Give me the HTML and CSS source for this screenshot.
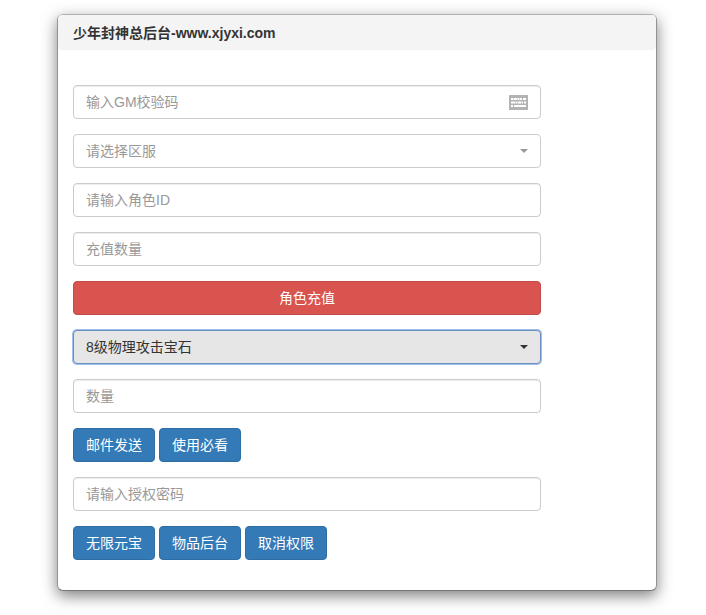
FILE: index.html
```html
<!DOCTYPE html>
<html lang="zh-CN">
<head>
<meta charset="utf-8">
<title>少年封神总后台</title>
<link rel="stylesheet" href="styles.css">
</head>
<body>
<main class="panel">
  <header class="panel-heading">少年封神总后台-www.xjyxi.com</header>
  <form class="panel-body">
    <div class="control"><span>输入GM校验码</span>
      <svg class="keyboard" width="19" height="15" viewBox="0 0 19 15"><rect width="19" height="15" rx=".5" fill="#b3b3b3"/><path d="M2 4h2.5M5 4h3M8.5 4h2M11 4h2M14 4h3M2 7.5h4M6.5 7.5h2M9 7.5h3M12.5 7.5h1.5M15 7.5h2M2 11h2M5 11h12" stroke="#fff" stroke-width="2"/></svg>
    </div>
    <div class="control select"><span>请选择区服</span><i class="caret"></i></div>
    <div class="control">请输入角色ID</div>
    <div class="control">充值数量</div>
    <button type="button" class="btn danger">角色充值</button>
    <div class="control select focused"><span>8级物理攻击宝石</span><i class="caret"></i></div>
    <div class="control">数量</div>
    <div class="actions"><button type="button" class="btn">邮件发送</button><button type="button" class="btn">使用必看</button></div>
    <div class="control">请输入授权密码</div>
    <div class="actions"><button type="button" class="btn">无限元宝</button><button type="button" class="btn">物品后台</button><button type="button" class="btn">取消权限</button></div>
  </form>
</main>
</body>
</html>
```
FILE: styles.css
```css
* { box-sizing: border-box; }
body {
  min-height: 615px;
  margin: 0;
  padding: 14px 49px 0 57px;
  background: #fff;
  color: #333;
  font: 14px/20px "Liberation Sans", "Noto Sans CJK SC", sans-serif;
}
.panel {
  height: 577px;
  border: 1px solid;
  border-color: #b0b0b0 #929292 #777;
  border-radius: 6px;
  background: #fff;
  box-shadow: 0 5px 15px rgba(0, 0, 0, .5);
}
.panel-heading {
  height: 35px;
  padding: 8px 15px;
  border-radius: 4px;
  background: #f4f4f4;
  font-weight: 700;
}
.panel-body {
  width: 498px;
  padding: 35px 15px 0;
  display: flex;
  flex-direction: column;
  gap: 15px;
}
.control {
  height: 34px;
  padding: 6px 12px;
  display: flex;
  align-items: center;
  justify-content: space-between;
  border: 1px solid #ccc;
  border-radius: 4px;
  background: #fff;
  color: #999;
  box-shadow: inset 0 1px 1px rgba(0, 0, 0, .075);
}
.select { box-shadow: none; }
.caret {
  border: 4px solid transparent;
  border-top-color: #999;
  border-bottom: 0;
}
.focused {
  border-color: #6c8fc4;
  background: #e6e6e6;
  color: #333;
  box-shadow: 0 0 0 1px #9dbfea;
}
.focused .caret { border-top-color: #333; }
.actions { display: flex; gap: 4px; }
.btn {
  width: 82px;
  height: 34px;
  padding: 6px 0;
  border: 1px solid #2e6da4;
  border-radius: 4px;
  background: #337ab7;
  color: #fff;
  font: inherit;
}
.btn.danger { width: 100%; border-color: #c14b48; background: #d9534f; }
```
